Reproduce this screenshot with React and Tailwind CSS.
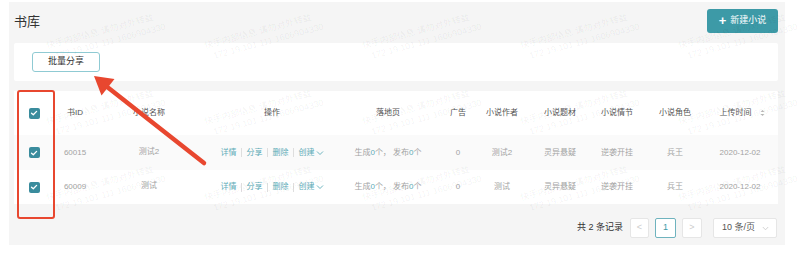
import React from 'react';

const COLS = 'grid grid-cols-[40px_42px_106px_140px_92px_48px_40px_76px_38px_78px_52px]';

const rows = [
  { id: '60015', name: '测试2', author: '测试2', bg: 'bg-[#fafafa]', h: 'h-[35px]' },
  { id: '60009', name: '测试', author: '测试', bg: 'bg-white', h: 'h-[34px]' },
];

const Check = () => (
  <div className="w-[11px] h-[11px] rounded-[2px] bg-[#3a8c9d] flex items-center justify-center">
    <svg width="8" height="8" viewBox="0 0 8 8">
      <path d="M1.5 4.2 L3.3 5.8 L6.6 2.4" fill="none" stroke="#fff" strokeWidth="1.3" strokeLinecap="round" strokeLinejoin="round" />
    </svg>
  </div>
);

const Sep = () => <span className="inline-block w-px h-[9px] bg-[#dedede] mx-[4.5px]" />;

const marks = [];
[12, 88, 164].forEach((y) => {
  [45, 203, 361, 519, 677].forEach((x) => marks.push({ x, y }));
});

export default function App() {
  return (
    <div className="relative w-[803px] h-[256px] bg-white overflow-hidden font-['Liberation_Sans','Noto_Sans_CJK_SC',sans-serif]">
      <div className="pt-[2px] pl-[9px]">
        <div className="w-[776px] h-[243px] bg-[#f5f5f5] pl-[5px] pr-[7px] pt-[7px]">
          {/* title row */}
          <div className="flex items-center justify-between h-[24px]">
            <h1 className="text-[13px] text-[#333] leading-none">书库</h1>
            <button className="w-[71px] h-[24px] rounded-[3px] bg-[#3d9aa7] text-white text-[9px] flex items-center justify-center gap-[4px]">
              <span className="text-[13px] font-bold leading-none -mt-px">+</span>
              <span>新建小说</span>
            </button>
          </div>

          {/* toolbar card */}
          <div className="mt-[10px] h-[38px] bg-white rounded-[2px] pl-[18px] pt-[9px]">
            <button className="w-[68px] h-[20px] border border-[#8fcad3] rounded-[3px] bg-white text-[9px] text-[#333] flex items-center justify-center">
              批量分享
            </button>
          </div>

          {/* table */}
          <div className="mt-[10px] bg-white text-[8px]">
            <div className={`${COLS} h-[44px] items-center text-center text-[#555]`}>
              <div className="flex justify-center"><Check /></div>
              <div>书ID</div>
              <div>小说名称</div>
              <div>操作</div>
              <div>落地页</div>
              <div>广告</div>
              <div>小说作者</div>
              <div>小说题材</div>
              <div>小说情节</div>
              <div>小说角色</div>
              <div className="flex items-center justify-center gap-[8px] pl-[4px]">
                <span>上传时间</span>
                <svg width="5" height="8" viewBox="0 0 5 8">
                  <path d="M0.5 3 L2.5 1 L4.5 3 Z M0.5 5 L2.5 7 L4.5 5 Z" fill="#bbb" />
                </svg>
              </div>
            </div>
            {rows.map((r) => (
              <div key={r.id} className={`${COLS} ${r.h} ${r.bg} items-center text-center text-[#a3a3a3]`}>
                <div className="flex justify-center"><Check /></div>
                <div>{r.id}</div>
                <div className="-mt-[2px]">{r.name}</div>
                <div className="flex items-center justify-center text-[#5eacb8]">
                  <span>详情</span><Sep /><span>分享</span><Sep /><span>删除</span><Sep />
                  <span>创建</span>
                  <svg width="8" height="6" viewBox="0 0 8 6" className="ml-px">
                    <path d="M1 1.5 L4 4.5 L7 1.5" fill="none" stroke="#5eacb8" strokeWidth="0.9" />
                  </svg>
                </div>
                <div>
                  生成<span className="text-[#5eacb8]">0</span>个， 发布<span className="text-[#5eacb8]">0</span>个
                </div>
                <div>0</div>
                <div>{r.author}</div>
                <div>灵异悬疑</div>
                <div>逆袭开挂</div>
                <div>兵王</div>
                <div>2020-12-02</div>
              </div>
            ))}
          </div>

          {/* pagination */}
          <div className="mt-[14px] flex items-center justify-end pr-px text-[9px]">
            <span className="text-[#333] mr-[7px]">共 2 条记录</span>
            <div className="w-[19px] h-[20px] bg-white border border-[#e6e6e6] rounded-[2px] flex items-center justify-center text-[#ccc]">&lt;</div>
            <div className="ml-[6px] w-[21px] h-[20px] bg-white border border-[#6fb3be] rounded-[2px] flex items-center justify-center text-[#3d9aa7]">1</div>
            <div className="ml-[6px] w-[20px] h-[20px] bg-white border border-[#e6e6e6] rounded-[2px] flex items-center justify-center text-[#ccc]">&gt;</div>
            <div className="ml-[11px] w-[64px] h-[20px] bg-white border border-[#e6e6e6] rounded-[2px] flex items-center pl-[8px] text-[#555]">
              <span>10 条/页</span>
              <svg width="7" height="5" viewBox="0 0 7 5" className="ml-[7px]">
                <path d="M0.8 1 L3.5 3.8 L6.2 1" fill="none" stroke="#c8c8c8" strokeWidth="0.8" />
              </svg>
            </div>
          </div>
        </div>
      </div>

      {/* watermark */}
      <div className="absolute inset-0 pointer-events-none">
        {marks.map((m, i) => (
          <div
            key={i}
            className="absolute origin-top-left -rotate-[15deg] text-[9px] leading-[12px] text-[rgba(0,0,0,0.06)] whitespace-nowrap"
            style={{ left: m.x, top: m.y + 28 }}
          >
            <div>快手内部信息 请勿对外转载</div>
            <div className="pl-[6px]">172.19.101.111 1606904330</div>
          </div>
        ))}
      </div>

      {/* red highlight + arrow */}
      <div className="absolute left-[17px] top-[90px] w-[38px] h-[129px] border-2 border-[#e8472f] rounded-[3px] pointer-events-none" />
      <svg className="absolute left-0 top-0 pointer-events-none" width="803" height="256">
        <line x1="204" y1="163" x2="106" y2="86" stroke="#e8472f" strokeWidth="4.5" strokeLinecap="round" />
        <polygon points="94,76 114.5,79 101.5,95.5" fill="#e8472f" />
      </svg>
    </div>
  );
}
